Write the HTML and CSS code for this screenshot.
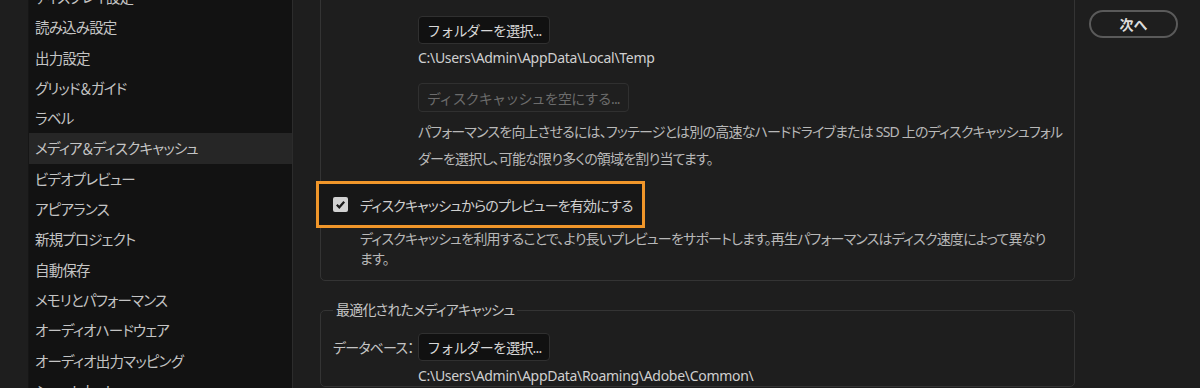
FILE: index.html
```html
<!DOCTYPE html>
<html lang="ja">
<head>
    <meta charset="UTF-8">
    <title>環境設定 - メディア＆ディスクキャッシュ</title>
    <link rel="stylesheet" href="styles.css">
</head>
<body>

<div class="app">
    <div class="strip"></div>

    <ul class="nav">
        <li>ディスプレイ設定</li>
        <li>読み込み設定</li>
        <li>出力設定</li>
        <li>グリッド＆ガイド</li>
        <li>ラベル</li>
        <li class="active">メディア＆ディスクキャッシュ</li>
        <li>ビデオプレビュー</li>
        <li>アピアランス</li>
        <li>新規プロジェクト</li>
        <li>自動保存</li>
        <li>メモリとパフォーマンス</li>
        <li>オーディオハードウェア</li>
        <li>オーディオ出力マッピング</li>
        <li>ショートカット</li>
    </ul>

    <div class="main">
        <div class="content">
            <div class="group">
                <button class="btn">フォルダーを選択...</button>
                <p class="path">C:\Users\Admin\AppData\Local\Temp</p>
                <button class="btn disabled">ディスクキャッシュを空にする...</button>
                <p class="note">パフォーマンスを向上させるには、フッテージとは別の高速なハードドライブまたは SSD 上のディスクキャッシュフォルダーを選択し、可能な限り多くの領域を割り当てます。</p>

                <div class="highlight">
                    <span class="checkbox">
                        <svg width="15" height="15" viewBox="0 0 15 15"><polyline points="3.8,7.8 6.3,10.3 11.2,4.8" fill="none" stroke="#1a1a1a" stroke-width="2.2"/></svg>
                    </span>
                    <span class="check-label">ディスクキャッシュからのプレビューを有効にする</span>
                </div>
                <p class="desc">ディスクキャッシュを利用することで、より長いプレビューをサポートします。再生パフォーマンスはディスク速度によって異なります。</p>
            </div>

            <fieldset class="group2">
                <legend>最適化されたメディアキャッシュ</legend>
                <div class="row">
                    <span class="row-label">データベース：</span>
                    <button class="btn">フォルダーを選択...</button>
                </div>
                <p class="path path2">C:\Users\Admin\AppData\Roaming\Adobe\Common\</p>
            </fieldset>
        </div>

        <div class="aside">
            <button class="next">次へ</button>
        </div>
    </div>
</div>

</body>
</html>
```

FILE: styles.css
```css
* {
    box-sizing: border-box;
}
body {
    margin: 0;
    background-color: #1e1e1e;
    font-family: "Noto Sans", "Noto Sans CJK JP", sans-serif;
    font-feature-settings: "palt";
    font-size: 14px;
    letter-spacing: -0.8px;
    color: #c8c8c8;
    overflow: hidden;
}
.app {
    display: flex;
    height: 388px;
    overflow: hidden;
}
.strip {
    width: 29px;
    flex-shrink: 0;
    background-color: #1e1e1e;
    border-right: 1px solid #161616;
}
.nav {
    width: 264px;
    flex-shrink: 0;
    margin: 0;
    padding: 0;
    list-style: none;
    background-color: #121212;
    border-right: 1px solid #2c2c2c;
}
.nav li {
    height: 30.3px;
    line-height: 30px;
    padding-left: 6px;
    font-size: 14.5px;
    color: #c4c4c4;
    white-space: nowrap;
}
.nav li:first-child {
    margin-top: -18px;
}
.nav li.active {
    background-color: #262626;
}
.main {
    flex: 1;
    display: flex;
    padding-left: 27px;
}
.content {
    width: 755px;
    flex-shrink: 0;
}
.group {
    margin-top: -20px;
    padding: 35px 10px 11px 97px;
    border: 1px solid #343434;
    border-radius: 5px;
}
.btn {
    display: block;
    height: 28px;
    padding: 0 8px;
    background-color: #111;
    border: 1px solid #303030;
    border-radius: 4px;
    color: #d8d8d8;
    font-family: inherit;
    font-size: 14px;
    letter-spacing: -0.8px;
}
.btn.disabled {
    height: 29px;
    margin-top: 15px;
    background-color: #1f1f1f;
    color: #6c6c6c;
}
.path {
    margin: 4px 0 0;
    line-height: 20px;
    letter-spacing: -0.3px;
    color: #d0d0d0;
}
.note {
    margin: 6px 0 0;
    line-height: 27px;
    color: #b8b8b8;
}
.highlight {
    display: flex;
    align-items: center;
    width: 329px;
    height: 47px;
    margin: 9px 0 0 -102px;
    padding-left: 14px;
    border: 3px solid #f0962a;
    background-color: #171717;
}
.checkbox {
    display: flex;
    flex-shrink: 0;
    width: 15px;
    height: 15px;
    background-color: #d2d2d2;
    border-radius: 2px;
}
.check-label {
    margin-left: 12px;
    white-space: nowrap;
    color: #cfcfcf;
}
.desc {
    margin: 1px 10px 0 -58px;
    line-height: 20px;
    color: #b8b8b8;
}
.group2 {
    margin: 19px 0 0;
    padding: 0 14px 0 12px;
    border: 1px solid #343434;
    border-radius: 5px;
}
.group2 legend {
    padding: 0 3px;
    line-height: 20px;
    color: #c4c4c4;
}
.row {
    display: flex;
    align-items: center;
    margin-top: 13px;
}
.row-label {
    width: 85px;
    flex-shrink: 0;
    white-space: nowrap;
    color: #c4c4c4;
}
.path2 {
    margin: 5px 0 0 85px;
    white-space: nowrap;
}
.aside {
    flex: 1;
    padding: 10px 0 0 14px;
}
.next {
    width: 89px;
    height: 28px;
    background-color: #1e1e1e;
    border: 2px solid #5a5a5a;
    border-radius: 14px;
    color: #dcdcdc;
    font-family: inherit;
    font-size: 14px;
    font-weight: bold;
}
```
